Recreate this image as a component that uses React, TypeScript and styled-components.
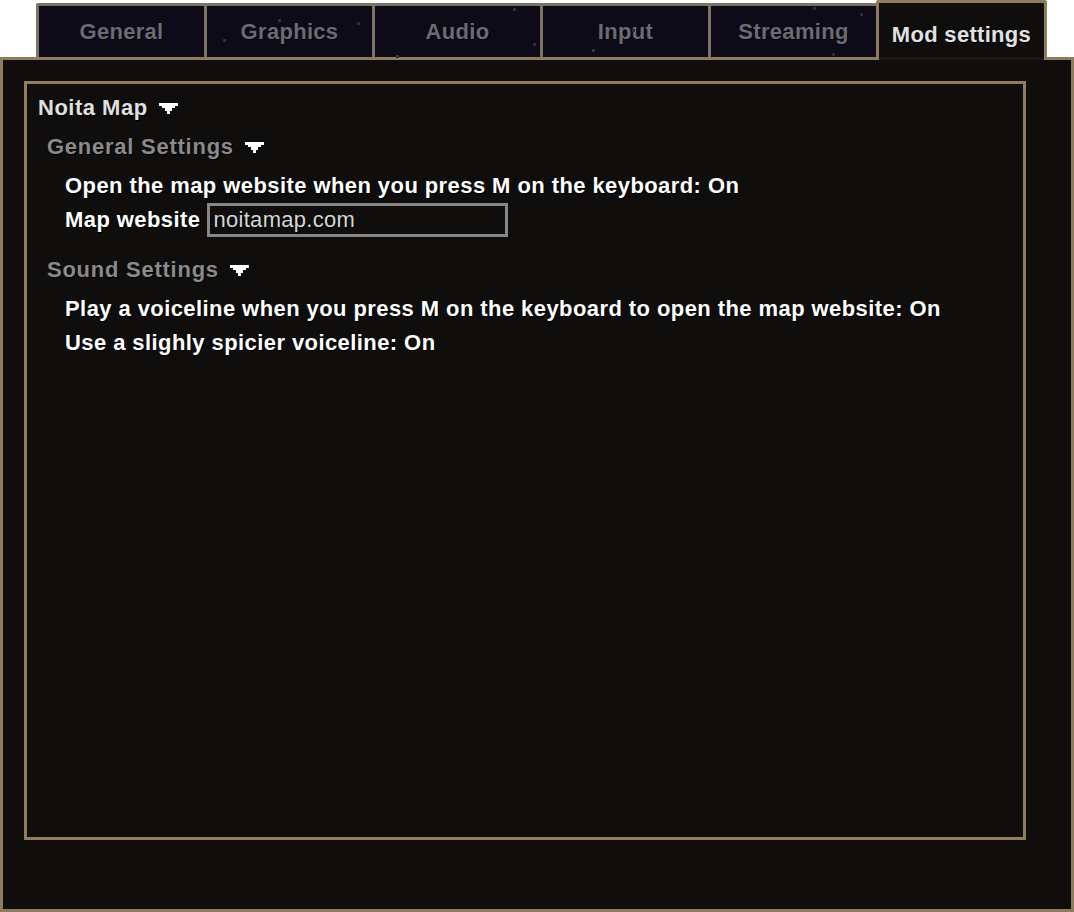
import React from 'react'
import styled, { createGlobalStyle } from 'styled-components'

const GlobalStyle = createGlobalStyle`
  html, body {
    margin: 0;
    padding: 0;
    background: #ffffff;
  }
  body {
    font-family: 'Liberation Sans', Arial, sans-serif;
  }
`

type Speck = { x: number; y: number; c?: string }

const tabs: { label: string; active?: boolean; specks: Speck[] }[] = [
  { label: 'General', specks: [] },
  { label: 'Graphics', specks: [{ x: 16, y: 33 }, { x: 71, y: 13, c: '#34333c' }, { x: 150, y: 16 }] },
  { label: 'Audio', specks: [{ x: 21, y: 49, c: '#34333a' }, { x: 138, y: 2, c: '#34333a' }, { x: 158, y: 37 }] },
  { label: 'Input', specks: [{ x: 49, y: 43, c: '#34333a' }, { x: 89, y: 23 }] },
  { label: 'Streaming', specks: [{ x: 102, y: 1 }, { x: 149, y: 7 }, { x: 121, y: 47, c: '#2c2b35' }] },
  { label: 'Mod settings', active: true, specks: [] },
]

export default function App() {
  return (
    <Screen>
      <GlobalStyle />
      <TabRow>
        {tabs.map((t) => (
          <Tab key={t.label} $active={t.active}>
            {t.specks.map((s, i) => (
              <Dot key={i} style={{ left: s.x, top: s.y, background: s.c }} />
            ))}
            <TabLabel $active={t.active}>{t.label}</TabLabel>
          </Tab>
        ))}
      </TabRow>
      <Panel>
        <InnerBox>
          <Heading $level={0}>
            Noita Map
            <Arrow />
          </Heading>

          <Heading $level={1}>
            General Settings
            <Arrow />
          </Heading>
          <ItemList>
            <Item>Open the map website when you press M on the keyboard: On</Item>
            <Item>
              Map website
              <TextBox>noitamap.com</TextBox>
            </Item>
          </ItemList>

          <Heading $level={1} $gapTop>
            Sound Settings
            <Arrow />
          </Heading>
          <ItemList>
            <Item>Play a voiceline when you press M on the keyboard to open the map website: On</Item>
            <Item>Use a slighly spicier voiceline: On</Item>
          </ItemList>
        </InnerBox>
      </Panel>
    </Screen>
  )
}

const Arrow = () => (
  <ArrowSvg width="19" height="11" viewBox="0 0 19 11">
    <polygon points="0,0 19,0 19,3 16,3 16,5 13,5 13,8 11,8 11,11 8,11 8,8 6,8 6,5 3,5 3,3 0,3" fill="#ffffff" />
  </ArrowSvg>
)

const Screen = styled.div`
  width: 1074px;
  height: 912px;
  display: flex;
  flex-direction: column;
`

const TabRow = styled.div`
  display: flex;
  align-items: flex-end;
  height: 57px;
  padding-left: 36px;
  flex-shrink: 0;
`

const Tab = styled.div<{ $active?: boolean }>`
  position: relative;
  z-index: ${(p) => (p.$active ? 2 : 1)};
  box-sizing: border-box;
  width: 171px;
  height: ${(p) => (p.$active ? '60px' : '54px')};
  margin-left: -3px;
  margin-bottom: ${(p) => (p.$active ? '-3px' : '0')};
  padding-top: ${(p) => (p.$active ? '6px' : '0')};
  display: flex;
  align-items: center;
  justify-content: center;
  border: 3px solid ${(p) => (p.$active ? '#8f7c5f' : '#7a7262')};
  border-bottom: none;
  border-radius: 3px 3px 0 0;
  background: ${(p) => (p.$active ? '#0f0e0d' : '#0c0b17')};
  box-shadow: ${(p) => (p.$active ? 'inset 0 -3px 0 #1a1918' : 'none')};

  &:first-child {
    margin-left: 0;
  }
`

const Dot = styled.span`
  position: absolute;
  width: 3px;
  height: 3px;
  background: #2f2e38;
`

const TabLabel = styled.span<{ $active?: boolean }>`
  font-size: 22px;
  font-weight: bold;
  letter-spacing: 0.3px;
  color: ${(p) => (p.$active ? '#e2e2e2' : '#6c6a72')};
  text-shadow: 1px 1px 0 ${(p) => (p.$active ? '#000000' : '#05040a')};
  white-space: nowrap;
`

const Panel = styled.div`
  flex: 1;
  box-sizing: border-box;
  border: 3px solid #8f7c5f;
  background: #0f0e0d;
  padding: 21px 45px 69px 21px;
  display: flex;
`

const InnerBox = styled.div`
  flex: 1;
  box-sizing: border-box;
  border: 3px solid #917e61;
  padding: 4px 11px;
  display: flex;
  flex-direction: column;
`

const Heading = styled.div<{ $level: number; $gapTop?: boolean }>`
  display: flex;
  align-items: center;
  height: 39px;
  padding-left: ${(p) => p.$level * 9}px;
  margin-top: ${(p) => (p.$gapTop ? '13px' : '0')};
  font-size: 22px;
  font-weight: bold;
  letter-spacing: ${(p) => (p.$level === 0 ? '0.5px' : '0.75px')};
  color: ${(p) => (p.$level === 0 ? '#e0e0e0' : '#8a8a8a')};
  text-shadow: 1px 1px 0 #000000;
  white-space: pre;
`

const ArrowSvg = styled.svg`
  display: block;
  flex-shrink: 0;
  margin-left: 11px;
  margin-top: 1px;
`

const ItemList = styled.div`
  display: flex;
  flex-direction: column;
  padding-top: 3px;
  padding-left: 27px;
`

const Item = styled.div`
  display: flex;
  align-items: center;
  gap: 7px;
  height: 34px;
  font-size: 22px;
  font-weight: bold;
  letter-spacing: 0.42px;
  color: #ffffff;
  text-shadow: 1px 1px 0 #000000;
  white-space: pre;
`

const TextBox = styled.div`
  box-sizing: border-box;
  width: 301px;
  height: 34px;
  border: 3px solid #868686;
  padding: 0 3px;
  display: flex;
  align-items: center;
  color: #d6d6d6;
  font-weight: normal;
  letter-spacing: 0.3px;
`
